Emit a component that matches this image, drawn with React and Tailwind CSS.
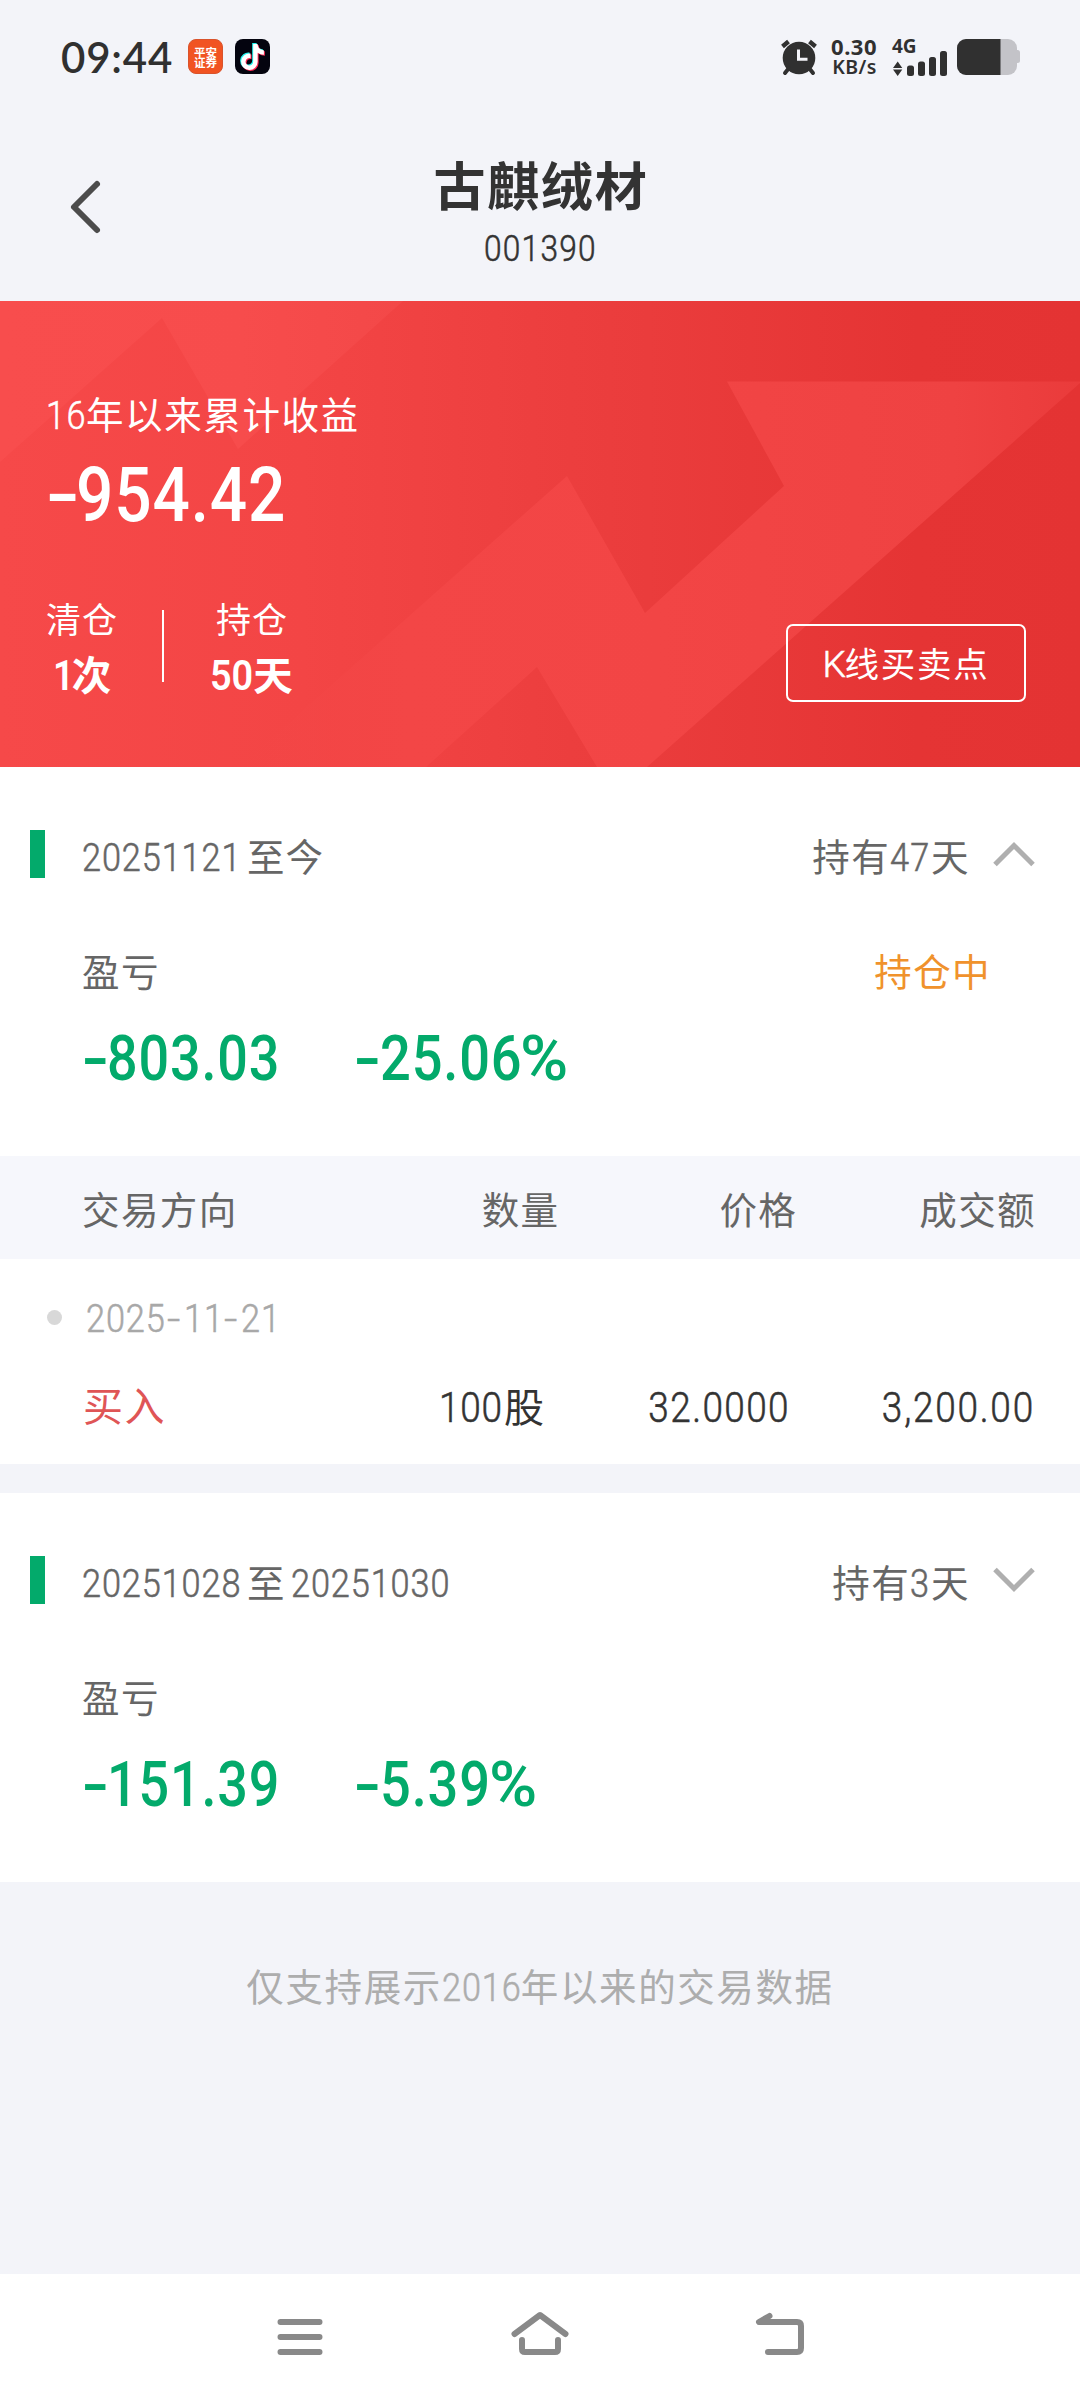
import React from "react";
import { FaTiktok } from "react-icons/fa6";

// Condensed numerals: the width reserved in the flow is given by the caller.
function Num({ children, className = "", right = false, thin = false }) {
  return (
    <span
      className={`inline-block whitespace-nowrap ${right ? "origin-right text-right" : "origin-left text-left"} ${thin ? "font-light [-webkit-text-stroke:0.55px_currentColor]" : ""} ${className}`}
    >
      {children}
    </span>
  );
}

function StatusBar() {
  return (
    <div className="flex h-[113px] items-center justify-between pl-[61px] pr-[60px]">
      <div className="flex items-center">
        <span className="w-[127px] whitespace-nowrap font-['Lato'] text-[42px] font-semibold leading-[60px] tracking-[0.8px] text-[#303030]">
          09:44
        </span>
        <div className="flex h-[35px] w-[35px] flex-col items-center justify-center rounded-[8px] border border-[#d9532c] bg-[#f15322] font-['Noto_Sans_CJK_SC'] text-[11.5px] font-bold leading-[10px] text-white">
          <span>平安</span>
          <span>证券</span>
        </div>
        <div className="relative ml-[12px] h-[35px] w-[35px] rounded-[8px] bg-[#04040f]">
          <FaTiktok className="absolute left-[5px] top-[4px] h-[26px] w-[23px] text-[#25f4ee]" />
          <FaTiktok className="absolute left-[7px] top-[6px] h-[26px] w-[23px] text-[#fe2c55]" />
          <FaTiktok className="absolute left-[6px] top-[5px] h-[26px] w-[23px] text-white" />
        </div>
      </div>
      <div className="flex items-center text-[#303030]">
        <svg width="38" height="38" viewBox="0 0 38 38" className="block">
          <circle cx="19" cy="20" r="16.3" fill="#303030" />
          <path d="M2.500 8.500 8.500 3.500M35.500 8.500 29.500 3.500" stroke="#303030" strokeWidth="4.4" strokeLinecap="butt" fill="none" />
          <path d="M9 30 5 35M29 30 33 35" stroke="#303030" strokeWidth="4" strokeLinecap="round" fill="none" />
          <path d="M18.500 11.500V21.200H27.500" stroke="#f3f4f9" strokeWidth="3" fill="none" />
        </svg>
        <div className="-mt-[2px] ml-[11px] flex w-[48px] flex-col items-end font-['Noto_Sans'] font-bold">
          <span className="text-[22px] leading-[21px] tracking-[0.5px]">0.30</span>
          <span className="whitespace-nowrap text-[19.500px] font-semibold leading-[19px] tracking-[0.5px]">KB/s</span>
        </div>
        <div className="ml-[15px] flex h-[38px] w-[56px] flex-col justify-between">
          <span className="-mb-[2px] font-['Noto_Sans'] text-[19px] font-bold leading-[16px]">4G</span>
          <svg width="56" height="26" viewBox="0 0 56 26" className="-mt-[2px] block" fill="#303030">
            <path d="M1 18 5.700 11.500 10.300 18ZM1 19.600 5.700 26 10.300 19.600Z" />
            <rect x="15" y="15.500" width="7" height="10.500" rx="2.500" />
            <rect x="26" y="11.500" width="7" height="14.500" rx="2.500" />
            <rect x="37" y="7" width="7" height="19" rx="2.500" />
            <rect x="48" y="1" width="7" height="25" rx="2.500" />
          </svg>
        </div>
        <svg width="63" height="36" viewBox="0 0 63 36" className="ml-[9px] block">
          <rect width="60" height="36" rx="9" fill="#c3c3c8" />
          <path d="M58 11h2.500a2.500 2.500 0 0 1 2.500 2.500v8a2.500 2.500 0 0 1-2.500 2.500H58Z" fill="#c3c3c8" />
          <path d="M43.500 0H9a9 9 0 0 0-9 9v18a9 9 0 0 0 9 9H43.500Z" fill="#303030" />
        </svg>
      </div>
    </div>
  );
}

function Header() {
  return (
    <div className="flex h-[188px] items-start px-[66px]">
      <svg width="40" height="56" viewBox="0 0 40 56" className="mt-[66px] block">
        <path d="M31 5 8 28 31 51" fill="none" stroke="#4c4c4c" strokeWidth="6" strokeLinecap="round" strokeLinejoin="round" />
      </svg>
      <div className="mr-[40px] mt-[38px] flex flex-1 flex-col items-center text-[#333]">
        <h1 className="pl-[2px] text-[52px] font-bold leading-[76px] tracking-[1.8px]">古麒绒材</h1>
        <Num thin className="ml-[8px] mt-[2px] w-[120px] scale-x-[0.88] text-[36px] leading-[40px] tracking-[1.4px]">
          001390
        </Num>
      </div>
    </div>
  );
}

function Summary() {
  return (
    <section className="relative h-[466px] overflow-hidden bg-[linear-gradient(90deg,#f64949_0%,#f34545_28%,#ea3c3c_60%,#e53434_85%,#e43333_100%)] text-white">
      <svg className="absolute inset-0" width="1080" height="466" viewBox="0 0 1080 466">
        <defs>
          <linearGradient id="arrow" x1="239" x2="1080" y1="0" y2="0" gradientUnits="userSpaceOnUse">
            <stop offset="0" stopColor="#f44747" stopOpacity="0" />
            <stop offset="0.2" stopColor="#f34646" />
            <stop offset="0.5" stopColor="#f24545" />
            <stop offset="0.85" stopColor="#ef4242" />
            <stop offset="1" stopColor="#ea3b3b" />
          </linearGradient>
          <linearGradient id="corner" x1="0" x2="403" y1="0" y2="0" gradientUnits="userSpaceOnUse">
            <stop offset="0" stopColor="#f84d4d" />
            <stop offset="0.6" stopColor="#f74c4c" />
            <stop offset="1" stopColor="#f34848" />
          </linearGradient>
        </defs>
        <path d="M0 0H403L238 148 162 17 0 161Z" fill="url(#corner)" />
        <path d="M727 80.500H1080V82L647 466H597L537 366 426 466H239L567 175 645 312 784 185Z" fill="url(#arrow)" />
      </svg>
      <div className="relative pl-[46px] pr-[54px] pt-[87px]">
        <div className="whitespace-nowrap text-[37.500px] leading-[56px] tracking-[1.6px]">
          <Num thin className="w-[40px] scale-x-[0.88] text-[39px]">16</Num>年以来累计收益
        </div>
        <div className="mt-[11px] flex text-[76px] font-medium leading-[80px]">
          <Num className="w-[30px] scale-x-[1.3]">-</Num>
          <Num className="w-[210px] scale-x-[0.865] tracking-[1px]">954.42</Num>
        </div>
        <div className="mt-[62px] flex items-start">
          <div className="flex w-[72px] flex-col items-center">
            <div className="whitespace-nowrap text-[35px] leading-[50px] tracking-[1px]">清仓</div>
            <div className="mt-[3px] whitespace-nowrap text-[39.500px] font-bold leading-[50px]">
              <Num className="w-[19px] scale-x-[0.86] text-[43px] font-semibold">1</Num>次
            </div>
          </div>
          <div className="ml-[44px] mt-[13px] h-[72px] w-[2px] bg-white" />
          <div className="ml-[43px] flex w-[89px] flex-col items-center">
            <div className="whitespace-nowrap pl-[1px] text-[35px] leading-[50px] tracking-[1px]">持仓</div>
            <div className="mt-[3px] whitespace-nowrap text-[39.500px] font-bold leading-[50px]">
              <Num className="w-[43px] scale-x-[0.88] text-[43px] font-semibold">50</Num>天
            </div>
          </div>
          <button className="ml-auto mt-[27px] h-[78px] w-[240px] rounded-[7px] border-2 border-white pt-[1px] text-[34.500px] leading-[75px] tracking-[1.7px]">
            <Num thin className="w-[22px] text-[37px] tracking-normal">K</Num>线买卖点
          </button>
        </div>
      </div>
    </section>
  );
}

function Chevron({ up }) {
  return (
    <svg width="42" height="26" viewBox="0 0 42 26" className={up ? "ml-[23px] mt-[11px] block" : "ml-[23px] mt-[11px] block rotate-180"}>
      <path d="M2 23.500 21 4.500 40 23.500" fill="none" stroke="#afafaf" strokeWidth="5" />
    </svg>
  );
}

function Position({ start, end, days, daysClass, up, status, profit, rate, rateClass }) {
  return (
    <div className="h-[389px] shrink-0 bg-white pt-[63px] text-[#666]">
      <div className="flex h-[48px] items-start pl-[30px] pr-[45px]">
        <div className="h-[48px] w-[15px] bg-[#03aa6b]" />
        <div className="ml-[37px] mt-[1px] whitespace-nowrap text-[37.500px] leading-[54px] tracking-[1px]">
          <Num thin className="w-[165px] scale-x-[0.88] text-[39px]">{start}</Num>至
          {end === "今" ? "今" : <Num thin className="ml-[5px] w-[164px] scale-x-[0.88] text-[39px]">{end}</Num>}
        </div>
        <div className="ml-auto mt-[1px] whitespace-nowrap text-[37.500px] leading-[54px] tracking-[1.4px]">
          持有<Num thin className={`${daysClass} scale-x-[0.88] text-[39px]`}>{days}</Num>天
        </div>
        <Chevron up={up} />
      </div>
      <div className="mt-[67px] flex items-center justify-between pl-[82px] pr-[89px] text-[37.500px] leading-[56px] tracking-[1.4px]">
        <span>盈亏</span>
        <span className="text-[#f0922c]">{status}</span>
      </div>
      <div className="mt-[23px] flex pl-[82px] text-[63px] font-medium leading-[70px] text-[#03aa6b]">
        <Num className="w-[25px] scale-x-[1.25]">-</Num>
        <Num className="w-[247px] scale-x-[0.855] tracking-[1px]">{profit}</Num>
        <Num className="w-[26px] scale-x-[1.25]">-</Num>
        <Num className={`${rateClass} scale-x-[0.86] tracking-[1px]`}>{rate}</Num>
        <Num className="scale-x-[1.04]">%</Num>
      </div>
    </div>
  );
}

function Trades() {
  return (
    <div className="shrink-0 bg-white">
      <div className="flex h-[103px] items-center bg-[#f6f7fc] pl-[82px] pr-[44px] pt-[6px] text-right text-[37.500px] leading-[56px] tracking-[1.4px] text-[#666]">
        <span className="w-[240px] text-left">交易方向</span>
        <span className="w-[238px]">数量</span>
        <span className="w-[238px]">价格</span>
        <span className="w-[239px]">成交额</span>
      </div>
      <div className="h-[205px] pt-[30px]">
        <div className="flex h-[56px] items-center pl-[47px] text-[39px] leading-[56px] text-[#a8a8a8]">
          <div className="mr-[24px] h-[15px] w-[15px] rounded-full bg-[#d8d8d8]" />
          <Num thin className="mt-[3px] w-[81px] scale-x-[0.88] tracking-[1px]">2025</Num>
          <Num thin className="mt-[3px] w-[17px] scale-x-[1.2]">-</Num>
          <Num thin className="mt-[3px] w-[40px] scale-x-[0.88] tracking-[1px]">11</Num>
          <Num thin className="mt-[3px] w-[17px] scale-x-[1.2]">-</Num>
          <Num thin className="mt-[3px] w-[40px] scale-x-[0.88] tracking-[1px]">21</Num>
        </div>
        <div className="mt-[34px] flex h-[58px] items-center pl-[82px] pr-[45px] text-right text-[40px] leading-[58px] text-[#333]">
          <span className="w-[240px] pl-[1px] text-left tracking-[1.5px] text-[#df5556]">买入</span>
          <span className="w-[222px]">
            <Num thin className="w-[65px] scale-x-[0.88] text-[42px] tracking-[0.8px]">100</Num>股
          </span>
          <span className="w-[246px]">
            <Num thin right className="scale-x-[0.88] text-[42px] tracking-[1.6px]">32.0000</Num>
          </span>
          <span className="w-[245px]">
            <Num thin right className="scale-x-[0.88] text-[42px] tracking-[2px]">3,200.00</Num>
          </span>
        </div>
      </div>
    </div>
  );
}

function NavBar() {
  return (
    <nav className="flex h-[126px] items-start justify-between bg-white px-[272px] pt-[34px]">
      <svg width="56" height="56" viewBox="272 2308 56 56" className="block">
        <path d="M280.500 2322H319.500M280.500 2337H319.500M280.500 2352H319.500" stroke="#898989" strokeWidth="6" strokeLinecap="round" />
      </svg>
      <svg width="64" height="56" viewBox="508 2308 64 56" className="block" fill="none" stroke="#898989" strokeWidth="6" strokeLinecap="round" strokeLinejoin="round">
        <path d="M514.500 2334 540 2315 565.500 2334" />
        <path d="M522 2340V2349Q522 2352 525 2352H555Q558 2352 558 2349V2340" />
      </svg>
      <svg width="56" height="56" viewBox="752 2308 56 56" className="block" fill="none" stroke="#898989" strokeWidth="6" strokeLinecap="round" strokeLinejoin="round">
        <path d="M769.500 2316 759 2322H797Q801 2322 801 2326V2348Q801 2352 797 2352H768" />
      </svg>
    </nav>
  );
}

export default function App() {
  return (
    <div className="flex h-[2400px] w-[1080px] flex-col overflow-hidden bg-[#f3f4f9] font-['Roboto','Noto_Sans_CJK_SC',sans-serif]">
      <StatusBar />
      <Header />
      <Summary />
      <Position start="20251121" end="今" days="47" daysClass="w-[41px]" up status="持仓中" profit="803.03" rate="25.06" rateClass="w-[140px]" />
      <Trades />
      <div className="h-[29px] shrink-0" />
      <Position start="20251028" end="20251030" days="3" daysClass="w-[21px]" profit="151.39" rate="5.39" rateClass="w-[109px]" />
      <p className="mt-[78px] text-center text-[37.500px] leading-[56px] tracking-[1.6px] text-[#adadad]">
        仅支持展示<Num thin className="w-[79px] scale-x-[0.88] text-[39px] tracking-[1px]">2016</Num>年以来的交易数据
      </p>
      <div className="flex-1" />
      <NavBar />
    </div>
  );
}
